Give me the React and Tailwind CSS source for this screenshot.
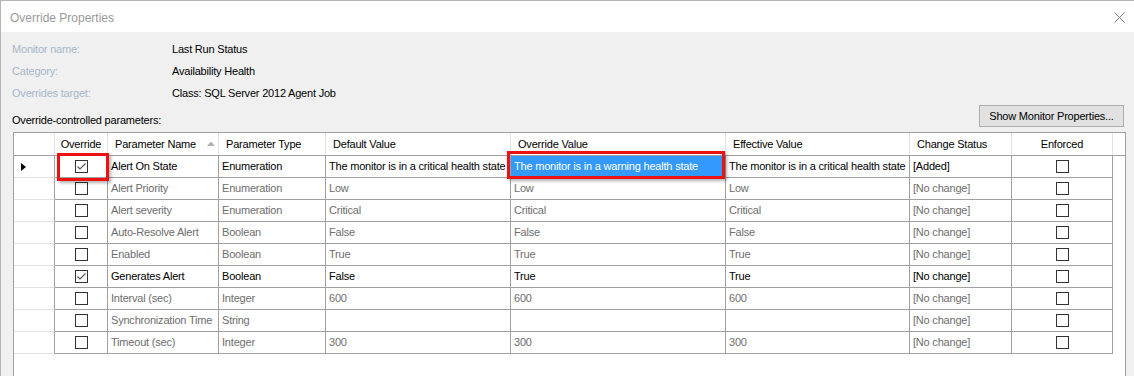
import React from 'react';

const cols = [
  { key: 'hdr', w: 'w-[41px]' },
  { key: 'override', title: 'Override', w: 'w-[53px]', center: true },
  { key: 'name', title: 'Parameter Name', w: 'w-[111px]', sort: true },
  { key: 'type', title: 'Parameter Type', w: 'w-[107px]' },
  { key: 'def', title: 'Default Value', w: 'w-[185px]' },
  { key: 'ovr', title: 'Override Value', w: 'w-[215px]' },
  { key: 'eff', title: 'Effective Value', w: 'w-[184px]' },
  { key: 'status', title: 'Change Status', w: 'w-[102px]' },
  { key: 'enf', title: 'Enforced', w: 'w-[101px]', center: true },
];

const rows = [
  { on: true, name: 'Alert On State', type: 'Enumeration', def: 'The monitor is in a critical health state', ovr: 'The monitor is in a warning health state', eff: 'The monitor is in a critical health state', status: '[Added]', active: true, current: true },
  { name: 'Alert Priority', type: 'Enumeration', def: 'Low', ovr: 'Low', eff: 'Low', status: '[No change]' },
  { name: 'Alert severity', type: 'Enumeration', def: 'Critical', ovr: 'Critical', eff: 'Critical', status: '[No change]' },
  { name: 'Auto-Resolve Alert', type: 'Boolean', def: 'False', ovr: 'False', eff: 'False', status: '[No change]' },
  { name: 'Enabled', type: 'Boolean', def: 'True', ovr: 'True', eff: 'True', status: '[No change]' },
  { on: true, name: 'Generates Alert', type: 'Boolean', def: 'False', ovr: 'True', eff: 'True', status: '[No change]', active: true },
  { name: 'Interval (sec)', type: 'Integer', def: '600', ovr: '600', eff: '600', status: '[No change]' },
  { name: 'Synchronization Time', type: 'String', def: '', ovr: '', eff: '', status: '[No change]' },
  { name: 'Timeout (sec)', type: 'Integer', def: '300', ovr: '300', eff: '300', status: '[No change]' },
];

function CheckBox({ checked }) {
  return (
    <div className="w-[13px] h-[13px] border border-[#333333] bg-white flex items-center justify-center">
      {checked && (
        <svg width="11" height="11" viewBox="0 0 11 11">
          <path d="M1.5 5.5 L4 8 L9.5 2.5" fill="none" stroke="#555555" strokeWidth="1.1" />
        </svg>
      )}
    </div>
  );
}

export default function App() {
  return (
    <div
      className="relative w-[1134px] h-[376px] overflow-hidden bg-[#f0f0f0] border-t border-l border-[#b4b4b4] text-[11px] tracking-[-0.2px] text-black"
      style={{ fontFamily: '"Liberation Sans", Arial, sans-serif' }}
    >
      {/* Title bar */}
      <div className="h-[31px] bg-white flex items-center justify-between pl-[9px] pr-[9px]">
        <span className="text-[12px] tracking-normal text-[#9a9a9a] pt-[2px]">Override Properties</span>
        <svg width="11" height="11" viewBox="0 0 11 11" className="mt-[1px]">
          <path d="M0.5 0.5 L10.5 10.5 M10.5 0.5 L0.5 10.5" stroke="#7a7a7a" strokeWidth="1" />
        </svg>
      </div>

      {/* Info */}
      <div className="pt-[6px] pl-[11px]">
        {[
          ['Monitor name:', 'Last Run Status'],
          ['Category:', 'Availability Health'],
          ['Overrides target:', 'Class: SQL Server 2012 Agent Job'],
        ].map(([k, v]) => (
          <div key={k} className="flex h-[22px] items-center">
            <span className="w-[160px] text-[#a6b7ca]">{k}</span>
            <span>{v}</span>
          </div>
        ))}

        <div className="flex justify-between h-[22px] mt-[1px] w-[1113px]">
          <span className="self-end leading-[14px]">Override-controlled parameters:</span>
          <button className="w-[145px] h-[22px] bg-[#e1e1e1] border border-[#adadad] text-[11px] tracking-[-0.2px] mr-[1px]">
            Show Monitor Properties...
          </button>
        </div>
      </div>

      {/* Grid */}
      <div className="relative ml-[12px] mt-[5px] w-[1113px] h-[260px] border border-[#a0a0a0] bg-white">
        <div className="flex h-[23px] border-b border-[#a0a0a0]">
          {cols.map((c) => (
            <div
              key={c.key}
              className={`${c.w} h-full flex items-center border-r border-[#e3e3e3] ${c.center ? 'justify-center' : 'pl-[7px]'} ${c.sort ? 'justify-between pr-[3px]' : ''}`}
            >
              {c.title}
              {c.sort && (
                <svg width="8" height="5" viewBox="0 0 8 5" className="mb-[1px]">
                  <path d="M0 5 L4 0.5 L8 5 Z" fill="#b0b0b0" />
                </svg>
              )}
            </div>
          ))}
        </div>

        {rows.map((r, i) => {
          const tc = r.active ? 'text-black' : 'text-[#6d6d6d]';
          return (
            <div key={i} className={`flex h-[22px] ${tc}`}>
              <div className="w-[41px] h-full border-b border-r border-b-[#e3e3e3] border-r-[#a0a0a0] flex items-center pl-[7px]">
                {r.current && (
                  <svg width="5" height="8" viewBox="0 0 5 8">
                    <path d="M0 0 L5 4 L0 8 Z" fill="#000000" />
                  </svg>
                )}
              </div>
              <div className="w-[53px] h-full border-b border-r border-[#a0a0a0] flex items-center justify-center">
                <CheckBox checked={r.on} />
              </div>
              <div className="w-[111px] h-full border-b border-r border-[#a0a0a0] flex items-center pl-[3px] whitespace-nowrap">{r.name}</div>
              <div className="w-[107px] h-full border-b border-r border-[#a0a0a0] flex items-center pl-[3px]">{r.type}</div>
              <div className="w-[185px] h-full border-b border-r border-[#a0a0a0] flex items-center pl-[3px] whitespace-nowrap">{r.def}</div>
              <div className={`w-[215px] h-full border-b border-r border-[#a0a0a0] flex items-center pl-[3px] whitespace-nowrap ${r.current ? 'bg-[#3399ff] text-white' : ''}`}>{r.ovr}</div>
              <div className="w-[184px] h-full border-b border-r border-[#a0a0a0] flex items-center pl-[3px] whitespace-nowrap">{r.eff}</div>
              <div className="w-[102px] h-full border-b border-r border-[#a0a0a0] flex items-center pl-[3px]">{r.status}</div>
              <div className="w-[101px] h-full border-b border-r border-[#a0a0a0] flex items-center justify-center">
                <CheckBox />
              </div>
            </div>
          );
        })}

        {/* Callout highlights */}
        <div className="absolute left-[43px] top-[20px] w-[52px] h-[28px] border-[3px] border-[#ee1111] shadow-[2px_2px_3px_rgba(0,0,0,0.3)]" />
        <div className="absolute left-[493px] top-[18px] w-[218px] h-[28px] border-[3px] border-[#ee1111] shadow-[2px_2px_3px_rgba(0,0,0,0.3)]" />
      </div>
    </div>
  );
}
